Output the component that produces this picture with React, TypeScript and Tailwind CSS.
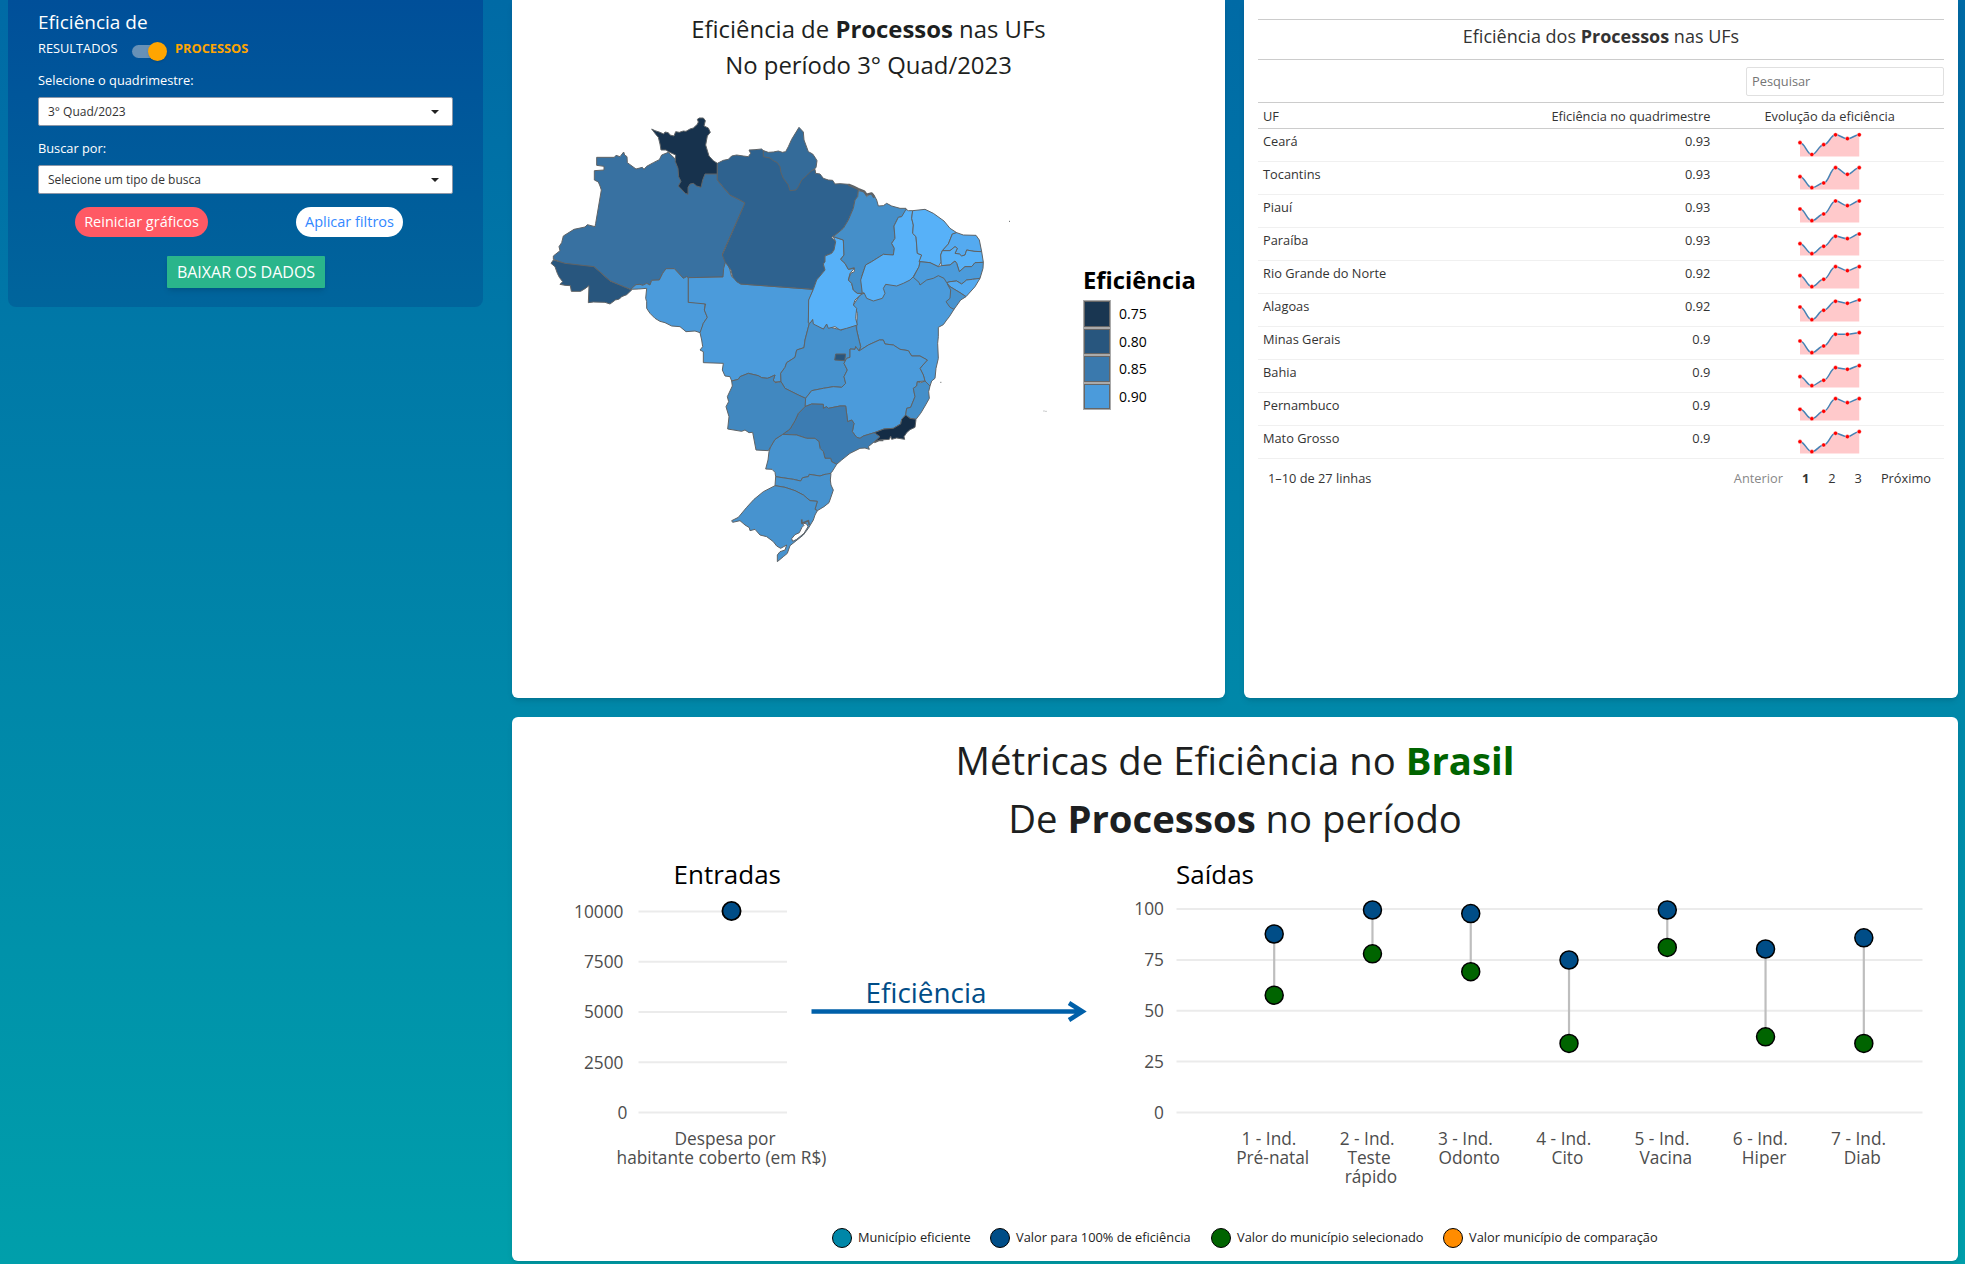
import React from "react";

type State = { id: string; fill: string; d: string };

const north: State[] = [
  { id: "AM", fill: "#3871a1", d: "200,172 253,172 258,166 270,170 281,156 284,165 291,170 292,188 318,207 337,202 342,208 350,199 370,188 388,179 395,165 415,157 460,200 530,200 562,222 562,240 580,262 600,285 630,300 645,309 577,462 587,484 579,531 475,533 470,530 460,535 433,506 408,506 398,520 388,540 365,541 360,555 350,550 338,556 330,553 318,554 302,568 270,556 240,542 192,500 150,497 105,491 70,478 70,468 90,452 87,440 95,428 100,408 132,388 165,381 172,374 195,380 197,370 214,270 210,258 205,246 193,240 193,212 222,210 222,199 200,196" },
  { id: "RR", fill: "#17324d", d: "365,87 375,92 390,97 401,102 405,96 415,98 420,105 432,108 437,95 448,97 460,93 468,94 480,87 490,84 502,73 505,66 502,58 508,54 520,54 526,62 522,78 535,84 541,97 532,108 527,135 537,168 550,182 562,190 562,222 525,222 518,240 513,262 500,258 490,250 480,252 474,262 474,283 466,280 445,258 453,244 446,230 444,205 436,185 437,165 415,155 408,150 393,150 390,132 385,112 378,104" },
  { id: "AC", fill: "#28567e", d: "70,480 105,490 192,500 240,543 305,570 290,584 275,590 268,597 256,600 240,612 225,607 190,606 175,608 177,557 165,566 152,574 124,574 121,557 105,556 90,553 98,545 88,532 82,520 75,500 63,490" },
  { id: "RO", fill: "#4b9bdb", d: "302,568 318,554 330,553 338,556 350,550 360,555 365,541 388,540 398,520 408,506 433,506 460,535 470,530 475,533 475,607 510,607 525,612 523,630 532,652 520,670 515,690 510,698 495,693 468,695 450,680 425,678 405,668 390,664 375,655 360,640 350,625 350,605 347,595 350,565 325,567" },
];

const midwest: State[] = [
  { id: "MT", fill: "#4b9bdb", d: "25,-7 129,-9 131,-35 137,-56 145,-45 150,-30 155,-10 172,0 182,12 330,23 400,28 387,60 385,128 388,130 375,180 372,203 350,210 345,232 320,248 315,262 302,280 303,305 283,306 280,300 285,285 270,292 262,295 245,293 235,287 205,280 180,290 175,298 155,303 150,290 135,288 127,270 130,250 70,248 70,215 60,210 68,200 65,180 60,158 70,130 82,112 73,90 77,72 25,67" },
];

const east: State[] = [
  { id: "PA", fill: "#2e628f", d: "-8,190 10,181 25,178 35,168 50,165 70,168 85,170 92,160 87,150 105,149 125,147 130,152 200,190 275,212 285,208 287,220 300,222 310,235 325,240 338,241 345,252 360,251 385,253 415,268 413,290 405,300 400,325 385,360 370,385 350,402 335,412 347,425 342,450 335,460 315,468 315,485 310,492 315,510 290,540 280,568 62,552 50,545 38,530 33,510 15,485 7,465 75,309 60,300 30,285 10,262 -8,240" },
  { id: "AP", fill: "#346b99", d: "130,152 145,157 160,156 175,153 187,157 197,155 205,140 215,118 237,82 250,96 252,120 265,155 278,162 285,172 291,182 288,203 275,212 262,225 245,240 235,260 228,270 210,272 205,255 190,235 183,218 180,200 172,188 160,182 150,174 130,170" },
];

const center: State[] = [
  { id: "BA", fill: "#4b9bdb", d: "547,42 600,20 700,-15 790,-15 812,15 822,88 808,110 800,120 790,134 775,142 775,170 773,190 775,235 768,265 765,295 755,303 750,318 735,305 730,285 720,265 742,240 720,228 695,228 685,212 660,208 640,195 615,192 610,180 598,180 565,195 537,213 542,200 537,180 530,150 530,135 532,100 527,85 520,75 530,60 540,45" },
  { id: "GO", fill: "#4692ce", d: "388,130 400,118 402,130 430,147 440,132 450,135 455,143 485,150 500,142 528,135 530,150 537,180 542,200 537,213 527,200 525,208 510,207 510,232 500,235 492,250 502,270 492,290 497,310 485,322 460,320 430,325 395,332 377,355 355,345 315,325 303,305 302,280 315,262 320,248 345,232 350,210 372,203 375,180" },
  { id: "DF", fill: "#28567e", d: "467,222 497,222 494,242 464,240" },
  { id: "MG", fill: "#4b9bdb", d: "375,380 375,357 395,332 430,325 460,320 485,322 497,310 492,290 502,270 492,250 500,235 510,232 510,207 525,208 527,200 537,213 565,195 598,180 610,180 615,192 640,195 660,208 685,212 695,228 720,228 742,240 720,265 730,285 735,303 712,305 710,318 700,325 705,350 692,382 680,385 677,405 665,418 662,432 640,445 612,447 583,458 550,468 540,475 530,472 517,455 522,430 515,420 503,425 497,378 480,378 445,385 440,380 430,385 430,373 395,372" },
  { id: "ES", fill: "#458fc9", d: "735,303 750,318 746,335 748,355 735,378 722,400 708,418 690,415 677,405 680,385 692,382 705,350 700,325 710,318 712,305 722,308" },
  { id: "SP", fill: "#3c7cb2", d: "395,372 430,373 430,385 440,380 445,385 480,378 497,378 503,425 515,420 522,430 517,455 530,472 540,475 550,468 583,458 602,470 583,485 565,500 568,508 555,504 540,505 510,520 485,540 470,553 455,545 452,535 435,535 430,515 420,505 417,485 405,475 380,475 350,465 308,463 330,447 345,422 355,400 375,380" },
  { id: "RJ", fill: "#142c45", d: "677,405 690,415 708,418 705,442 690,449 680,458 672,470 674,478 650,474 635,478 632,468 628,478 600,480 583,486 600,470 583,458 612,447 640,445 662,432 665,418" },
  { id: "PR", fill: "#4793cf", d: "308,463 350,465 380,475 405,475 417,485 420,505 430,515 435,535 452,535 455,545 470,553 455,577 445,585 435,583 420,588 388,583 385,590 368,593 362,603 340,598 300,592 287,590 285,577 276,568 257,567 264,540 267,515 272,500 285,478" },
  { id: "SC", fill: "#4793cf", d: "287,590 300,592 340,598 362,603 368,593 385,590 388,583 420,588 435,583 453,580 451,600 453,615 460,630 455,645 447,668 432,680 412,692 405,688 412,664 390,662 370,645 345,632 315,622 285,617" },
  { id: "RS", fill: "#4793cf", d: "285,617 315,622 345,632 370,645 390,662 412,664 405,688 412,692 405,705 400,720 385,745 370,765 345,785 330,797 322,820 310,830 292,845 292,825 300,815 315,810 320,795 302,805 290,798 280,785 260,770 240,765 225,748 210,752 208,743 195,735 180,722 158,727 155,722 175,712 200,682 222,658 250,635" },
  { id: "MS", fill: "#4188c0", d: "155,303 175,298 180,290 205,280 235,287 245,293 262,295 270,292 285,285 280,300 285,308 303,305 315,325 355,345 377,355 375,380 355,400 345,422 330,447 308,463 285,478 272,500 265,512 228,510 218,457 207,458 195,450 185,454 143,447 147,410 138,380 146,365 142,350 157,318" },
];

const northeast: State[] = [
  { id: "TO", fill: "#57b1f8", d: "340,410 370,420 372,465 362,478 375,490 385,508 403,505 390,520 385,540 395,550 400,570 412,580 427,580 405,600 400,615 410,625 407,655 412,675 380,685 360,690 345,680 325,685 320,672 310,687 280,672 278,658 270,670 265,668 266,600 280,568 290,540 315,510 310,492 315,485 315,468 335,460 342,450 347,425" },
  { id: "MA", fill: "#458fc9", d: "415,272 435,275 440,290 450,280 460,282 470,300 475,318 490,317 500,310 515,318 540,325 558,325 557,335 545,350 535,352 522,378 525,415 515,430 523,445 520,465 490,463 455,485 437,495 425,530 427,580 412,580 400,570 395,550 385,540 392,520 403,515 403,503 385,508 375,490 362,478 372,465 370,420 340,410 370,385 385,360 400,325 405,300 413,290" },
  { id: "PI", fill: "#57b1f8", d: "558,328 565,332 578,332 575,355 580,375 578,400 588,410 592,460 605,465 600,485 597,500 580,530 570,540 550,550 530,558 497,553 490,565 495,580 487,595 460,603 440,595 432,578 427,580 422,540 437,495 455,485 490,463 520,465 523,445 515,430 525,415 522,378 535,352 545,350" },
  { id: "CE", fill: "#57b1f8", d: "578,332 615,328 640,340 672,363 690,385 710,398 697,402 685,432 667,452 662,465 664,485 655,500 630,488 597,485 605,465 592,460 588,410 578,400 580,375 575,355" },
  { id: "RN", fill: "#54aaf0", d: "710,398 730,405 768,406 778,420 785,455 762,454 740,450 735,465 725,468 718,462 705,460 712,445 705,440 690,452 667,452 685,432 697,402" },
  { id: "PB", fill: "#57b1f8", d: "667,452 690,452 705,440 712,445 705,460 718,462 725,468 735,465 740,450 762,454 785,455 790,487 765,488 755,500 735,500 718,515 710,490 705,483 690,495 664,497 662,465" },
  { id: "PE", fill: "#4b9bdb", d: "790,487 789,505 780,535 757,538 740,540 725,552 710,543 690,545 680,548 672,535 655,527 640,535 620,540 600,555 597,547 580,532 597,500 600,485 630,488 655,500 664,497 690,495 705,483 710,490 718,515 735,500 755,500 765,488" },
  { id: "AL", fill: "#54aaf0", d: "780,535 765,560 738,590 720,578 690,560 680,548 690,545 710,543 725,552 740,540 757,538" },
  { id: "SE", fill: "#4793cf", d: "682,552 690,560 720,578 738,590 722,600 702,628 690,622 678,605 690,595 692,570" },
];

function Region({ states, shift }: { states: State[]; shift?: string }) {
  return (
    <g transform={shift}>
      {states.map((s) => (
        <polygon key={s.id} points={s.d} fill={s.fill} />
      ))}
    </g>
  );
}

function BrazilMap() {
  return (
    <svg width="520" height="470" viewBox="0 0 1560 1410" aria-label="Mapa do Brasil">
      <g stroke="#5f6366" strokeWidth="3" strokeLinejoin="round">
        <Region states={north} />
        <Region states={midwest} shift="translate(450 540)" />
        <Region states={east} shift="translate(570 0)" />
        <Region states={center} shift="translate(450 540)" />
        <Region states={northeast} shift="translate(570 0)" />
        <polygon transform="translate(450 540)" fill="#fff" points="365,728 380,732 384,740 372,760 350,778 338,784 335,776 345,764 358,758 366,742 372,736" />
        <polyline transform="translate(450 540)" fill="none" strokeWidth="5" points="365,718 366,730 385,722 388,735" />
        <polyline transform="translate(570 0)" fill="none" strokeWidth="7" points="385,254 400,260 415,267 432,274 440,284 455,280 463,293" />
        <polyline transform="translate(450 540)" fill="none" strokeWidth="4" points="583,488 598,481 610,482" />
        <path d="M1437 364h3M1231 847h3M1541 933h2M1547 934h2" strokeWidth="3" />
      </g>
    </svg>
  );
}

const legendSteps = [
  ["0.75", "bg-[#193651]"],
  ["0.80", "bg-[#28567e]"],
  ["0.85", "bg-[#3a79ad]"],
  ["0.90", "bg-[#4b9bdb]"],
];

const rows: [string, string, number[]][] = [
  ["Ceará", "0.93", [13.7, 25.5, 15.7, 5.8, 9.7, 5.8]],
  ["Tocantins", "0.93", [14.7, 25.7, 21, 5.7, 12.3, 5.7]],
  ["Piauí", "0.93", [14, 25.7, 19, 6, 10.7, 6]],
  ["Paraíba", "0.93", [15.7, 25.7, 18.3, 8.3, 10.7, 6]],
  ["Rio Grande do Norte", "0.92", [14.7, 25.7, 18.3, 5.7, 9.7, 5.7]],
  ["Alagoas", "0.92", [13, 25.7, 16.3, 7.3, 9.3, 6]],
  ["Minas Gerais", "0.9", [14, 25.7, 19, 7.3, 7.3, 5.7]],
  ["Bahia", "0.9", [16.7, 25.7, 20.3, 7.7, 9.3, 5.7]],
  ["Pernambuco", "0.9", [16.3, 25.7, 18.3, 5.7, 9.7, 5.7]],
  ["Mato Grosso", "0.9", [15.7, 25.7, 19, 7.3, 10.7, 5.7]],
];

function Spark({ ys }: { ys: number[] }) {
  const x = (i: number) => 3 + i * 11.85;
  const line = ys
    .map((y, i) => (i === 0 ? `M${x(0)} ${y}` : `C${x(i - 1) + 5} ${ys[i - 1]} ${x(i) - 5} ${y} ${x(i)} ${y}`))
    .join("");
  return (
    <svg width="65" height="32" className="block">
      <path d={`${line}V27.5H3Z`} fill="#ffc9cb" />
      <path d={line} fill="none" stroke="#4682b4" strokeWidth="1.5" />
      {ys.map((y, i) => (
        <circle key={i} cx={x(i)} cy={y} r="2.1" fill="#f00" stroke="#fff" strokeOpacity="0.6" strokeWidth="0.7" />
      ))}
    </svg>
  );
}

const outputs: [string[], number, number][] = [
  [["1 - Ind.", "Pré-natal"], 934, 995.2],
  [["2 - Ind.", "Teste", "rápido"], 910, 953.8],
  [["3 - Ind.", "Odonto"], 913.6, 971.7],
  [["4 - Ind.", "Cito"], 960, 1043.4],
  [["5 - Ind.", "Vacina"], 910, 947.4],
  [["6 - Ind.", "Hiper"], 949, 1036.8],
  [["7 - Ind.", "Diab"], 937.8, 1043.4],
];

function Metrics() {
  const left: [string, number][] = [["10000", 911.5], ["7500", 961.8], ["5000", 1012], ["2500", 1062.3], ["0", 1112.5]];
  const right: [string, number][] = [["100", 909], ["75", 959.9], ["50", 1010.7], ["25", 1061.6], ["0", 1112.5]];
  return (
    <svg width="1445" height="356" viewBox="512 849 1445 356" className="block" fontSize="17.3" fill="#4d4d4d">
      <g stroke="#ebebeb" strokeWidth="2">
        {left.map(([t, y]) => <path key={t} d={`M638.5 ${y}H787`} />)}
        {right.map(([t, y]) => <path key={t} d={`M1176.5 ${y}H1922.5`} />)}
      </g>
      {left.map(([t, y]) => (
        <text key={t} x={t === "0" ? 627.5 : 623.5} y={y + 6.2} textAnchor="end">{t}</text>
      ))}
      {right.map(([t, y]) => (
        <text key={t} x="1164" y={y + 6.2} textAnchor="end">{t}</text>
      ))}
      <g fontSize="26" fill="#000">
        <text x="673.5" y="884">Entradas</text>
        <text x="1176" y="884">Saídas</text>
      </g>
      <circle cx="731.5" cy="911" r="9.1" fill="#004d87" stroke="#000" strokeWidth="1.8" />
      <text textAnchor="middle">
        <tspan x="725" y="1145">Despesa por</tspan>
        <tspan x="721.5" y="1164">habitante coberto (em R$)</tspan>
      </text>
      <text x="926" y="1002.5" textAnchor="middle" fontSize="27.9" fill="#004d87">Eficiência</text>
      <path d="M811.5 1011.5H1082M1069 1003L1082.5 1011.5L1069 1020" fill="none" stroke="#0060a9" strokeWidth="4.5" />
      {outputs.map(([label, hi, lo], i) => {
        const x = 1274.2 + i * 98.27;
        return (
          <g key={label[0]}>
            <path d={`M${x} ${hi}V${lo}`} stroke="#bebebe" strokeWidth="2.2" />
            <circle cx={x} cy={hi} r="9" fill="#004d87" stroke="#000" strokeWidth="1.5" />
            <circle cx={x} cy={lo} r="9" fill="#006400" stroke="#000" strokeWidth="1.5" />
            <text textAnchor="middle">
              {label.map((t, k) => (
                <tspan key={t} x={x - (k === 0 ? 5.3 : label.length === 3 && k === 1 ? 3.4 : 1.5)} y={1145 + k * 19}>{t}</tspan>
              ))}
            </text>
          </g>
        );
      })}
    </svg>
  );
}

function Select({ label, value }: { label: string; value: string }) {
  return (
    <div className="h-[68px]">
      <label className="block h-[26px] text-[12.8px] leading-[18px] text-white">{label}</label>
      <div className="flex h-[29px] items-center justify-between rounded-[2px] border border-[#8c97a8] bg-white pl-[9px] pr-[13px] text-[12px] text-[#333]">
        <span>{value}</span>
        <span className="h-0 w-0 border-x-4 border-t-4 border-x-transparent border-t-[#222]" />
      </div>
    </div>
  );
}

export default function App() {
  return (
    <div className="flex h-[1264px] w-[1965px] overflow-hidden bg-linear-to-b from-[#006aa5] to-[#009fab] pl-2 font-['Open_Sans',sans-serif] text-[#212121]">
      <aside className="h-[307px] w-[475px] shrink-0 rounded-b-lg bg-linear-to-b from-[#004f99] to-[#00659c] px-[30px] pt-[9px] text-white">
        <h1 className="h-[29px] text-[19px] leading-[26px]">Eficiência de</h1>
        <div className="flex h-[33px] text-[12.8px] leading-[20px]">
          <span className="w-[79px]">RESULTADOS</span>
          <span className="relative ml-[15px] mt-[7px] h-[13px] w-[34px] rounded-full bg-[#6791b7]">
            <span className="absolute -right-[1px] -top-[3px] h-[19px] w-[19px] rounded-full bg-[#ffa500] shadow-sm" />
          </span>
          <span className="ml-[9px] font-bold text-[#ffa500]">PROCESSOS</span>
        </div>
        <Select label="Selecione o quadrimestre:" value="3° Quad/2023" />
        <Select label="Buscar por:" value="Selecione um tipo de busca" />
        <div className="flex justify-between pl-[37px] pr-[50px]">
          <button className="h-[30px] w-[133px] rounded-full bg-[#ff5964] text-[14.5px] text-white">Reiniciar gráficos</button>
          <button className="h-[30px] w-[107px] rounded-full bg-white text-[14.5px] text-[#3388ff]">Aplicar filtros</button>
        </div>
        <button className="ml-[129px] mt-[19px] block h-8 w-[158px] rounded-[1px] bg-[#2ab58b] text-base text-white shadow-md">BAIXAR OS DADOS</button>
      </aside>

      <main className="ml-[29px] flex w-[1446px] shrink-0 flex-col">
        <div className="flex h-[698px] gap-[19px]">
          <section className="w-[713px] shrink-0 rounded-b-md bg-white shadow-md">
            <h2 className="pt-[11px] text-center text-[23.9px] leading-[36px] text-[#1d1f21]">
              Eficiência de <b>Processos</b> nas UFs
              <br />
              No período 3° Quad/2023
            </h2>
            <div className="mt-[17px] flex pl-[18px]">
              <BrazilMap />
              <div className="ml-[33px] mt-[161px] shrink-0 text-black">
                <div className="text-[23.8px] font-bold leading-[39px]">Eficiência</div>
                {legendSteps.map(([t, bg]) => (
                  <div key={t} className="flex h-[27.5px] items-center text-[14px]">
                    <span className={`h-[27.5px] w-7 border-2 border-[#666] outline outline-1 -outline-offset-1 outline-[#aaa] ${bg}`} />
                    <span className="ml-[8px]">{t}</span>
                  </div>
                ))}
              </div>
            </div>
          </section>

          <section className="w-[714px] rounded-b-md bg-white px-[14px] pt-[19px] text-[12.8px] text-[#333] shadow-md">
            <h3 className="h-[41px] border-y border-[#ccc] text-center text-[18px] leading-[33px]">
              Eficiência dos <b>Processos</b> nas UFs
            </h3>
            <div className="ml-auto mt-[7px] flex h-[29px] w-[198px] items-center rounded-[2px] border border-[#e0e0e0] pl-[5px] text-[#757575]">Pesquisar</div>
            <div className="mt-[6px] grid h-[27px] grid-cols-3 border-y border-[#ccc] leading-[26px]">
              <span className="pl-[5px]">UF</span>
              <span className="pr-[5px] text-right">Eficiência no quadrimestre</span>
              <span className="text-center">Evolução da eficiência</span>
            </div>
            {rows.map(([uf, v, ys]) => (
              <div key={uf} className="grid h-[33px] grid-cols-3 border-b border-[#f0f0f0] leading-[25px]">
                <span className="pl-[5px]">{uf}</span>
                <span className="pr-[5px] text-right">{v}</span>
                <span className="flex justify-center"><Spark ys={ys} /></span>
              </div>
            ))}
            <div className="flex pl-[10px] pt-[9px] leading-[20px]">
              <span>1–10 de 27 linhas</span>
              <span className="ml-auto text-[#888]">Anterior</span>
              <span className="ml-[19px] font-bold">1</span>
              <span className="ml-[19px]">2</span>
              <span className="ml-[19px]">3</span>
              <span className="ml-[19px] mr-[13px]">Próximo</span>
            </div>
          </section>
        </div>

        <section className="mt-[19px] h-[544px] rounded-md bg-white shadow-md">
          <h2 className="h-[132px] pt-[14px] text-center text-[38.3px] leading-[58px] text-[#1d1f21]">
            Métricas de Eficiência no <b className="text-[#006400]">Brasil</b>
            <br />
            De <b>Processos</b> no período
          </h2>
          <Metrics />
          <div className="flex items-center pl-[320px] pt-[23px] text-[12.8px] text-[#222]">
            <span className="h-5 w-5 rounded-full border-[1.5px] border-black bg-[#0087a8]" />
            <span className="ml-[6px] w-[132px]">Município eficiente</span>
            <span className="h-5 w-5 rounded-full border-[1.5px] border-black bg-[#004d87]" />
            <span className="ml-[6px] w-[195px]">Valor para 100% de eficiência</span>
            <span className="h-5 w-5 rounded-full border-[1.5px] border-black bg-[#006400]" />
            <span className="ml-[6px] w-[206px]">Valor do município selecionado</span>
            <span className="h-5 w-5 rounded-full border-[1.5px] border-black bg-[#ff8c00]" />
            <span className="ml-[6px]">Valor município de comparação</span>
          </div>
        </section>
      </main>
    </div>
  );
}
